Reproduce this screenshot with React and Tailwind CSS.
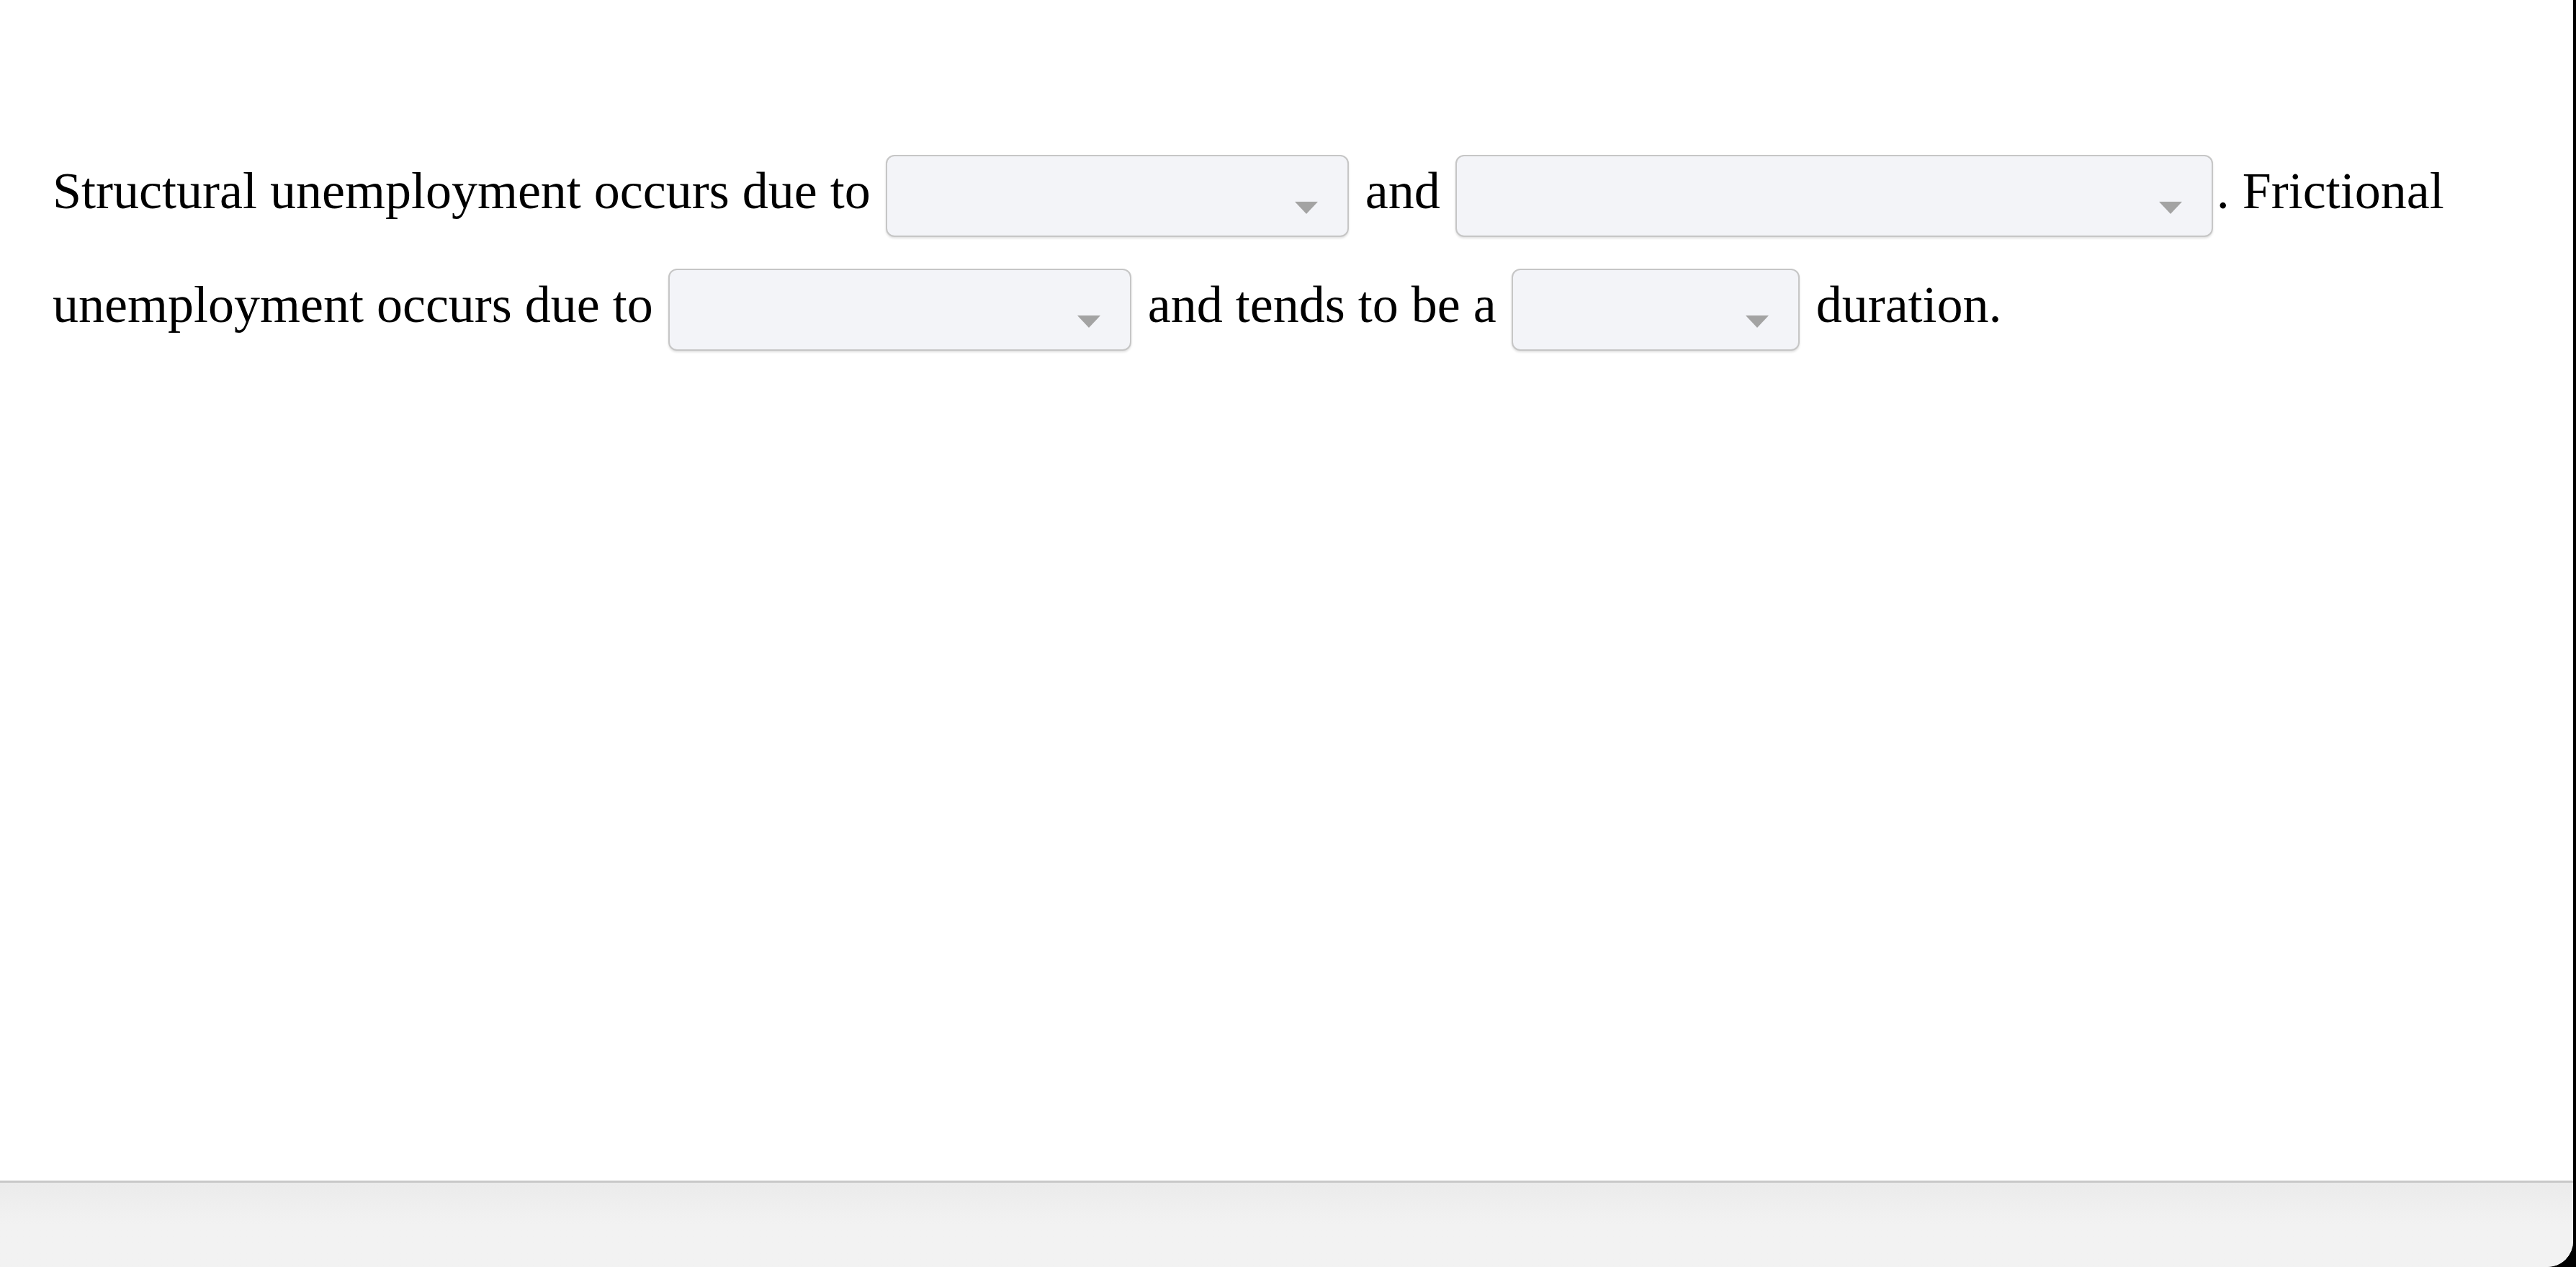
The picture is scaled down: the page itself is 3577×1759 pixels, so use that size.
import React from 'react';

function Dropdown({ width }) {
  return (
    <span
      className={`relative inline-block align-middle h-[114px] ml-[3px] mr-[5px] rounded-[12px] border-2 border-[#c6c6c6] bg-[#f3f4f8] shadow-[0_2px_3px_rgba(0,0,0,0.12)] ${width}`}
    >
      <svg
        className="absolute right-[41px] bottom-[30px]"
        width="32"
        height="17"
        viewBox="0 0 32 17"
      >
        <polygon points="0,0 32,0 16,17" fill="#a3a3a3" />
      </svg>
    </span>
  );
}

export default function App() {
  return (
    <div className="flex h-[1759px] w-full bg-black">
      <div className="flex flex-1 flex-col overflow-hidden rounded-br-[36px] bg-white">
        <div className="flex-1 bg-white">
          <p
            className="pl-[73px] pr-[60px] pt-[186px] text-[72px] leading-[158px] text-black"
            style={{ fontFamily: '"Liberation Serif", "Times New Roman", serif' }}
          >
            Structural unemployment occurs due to <Dropdown width="w-[643px]" /> and{' '}
            <Dropdown width="w-[1052px]" />. Frictional unemployment occurs due to{' '}
            <Dropdown width="w-[643px]" /> and tends to be a <Dropdown width="w-[400px]" /> duration.
          </p>
        </div>
        <div className="h-[3px] bg-[#c8c8c8]" />
        <div className="h-[117px] bg-gradient-to-b from-[#ebebeb] via-[#f2f2f2] to-[#f2f2f2]" />
      </div>
      <div className="w-[4px]" />
    </div>
  );
}
